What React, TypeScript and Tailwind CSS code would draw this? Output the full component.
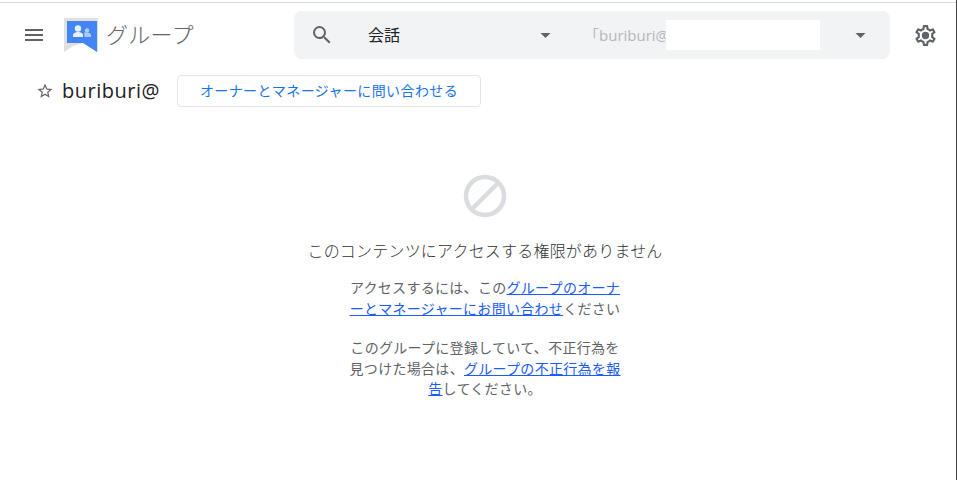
const Caret = () => (
  <svg width="11" height="5" viewBox="0 0 10 5" className="shrink-0">
    <path d="M0 0h10L5 5z" fill="#5f6368" />
  </svg>
);

const GroupsLogo = () => (
  <svg width="34" height="34" viewBox="0 0 34 34" className="shrink-0">
    <path d="M0 0h34v34L19 25 9 28 0 34z" fill="#e0e0e0" />
    <path d="M3 3h30v31L19 25H3z" fill="#4285f4" />
    <circle cx="14" cy="10.500" r="3.200" fill="#e8f0fe" />
    <path d="M9 19v-2c0-2 3-3 5-3s5 1 5 3v2z" fill="#e8f0fe" />
    <circle cx="23" cy="12.500" r="2.200" fill="#aecbfa" />
    <path d="M20.500 19v-2c0-.9-.4-1.500-.9-2 1-.4 2.400-.5 3.400-.4 1.800.2 4 .8 4 2.400v2z" fill="#aecbfa" />
  </svg>
);

const MenuIcon = () => (
  <svg width="24" height="24" viewBox="0 0 24 24" fill="#5f6368" className="shrink-0">
    <path d="M3 18h18v-2H3v2zm0-5h18v-2H3v2zm0-7v2h18V6H3z" />
  </svg>
);

const SearchIcon = () => (
  <svg width="24" height="24" viewBox="0 0 24 24" fill="#5f6368" className="shrink-0 ml-[16px]">
    <path d="M15.500 14h-.79l-.28-.27A6.471 6.471 0 0 0 16 9.500 6.500 6.500 0 1 0 9.500 16c1.610 0 3.090-.59 4.230-1.570l.27.28v.79l5 4.990L20.490 19l-4.990-5zm-6 0C7.010 14 5 11.990 5 9.500S7.010 5 9.500 5 14 7.010 14 9.500 11.990 14 9.500 14z" />
  </svg>
);

const GearIcon = () => (
  <svg width="25" height="25" viewBox="0 0 24 24" fill="#5f6368" className="shrink-0 ml-[23px]">
    <path d="M19.430 12.980c.04-.32.07-.64.07-.98 0-.34-.03-.66-.07-.98l2.110-1.650c.19-.15.24-.42.12-.64l-2-3.460c-.09-.16-.26-.25-.44-.25-.06 0-.12.01-.17.03l-2.490 1c-.52-.4-1.080-.73-1.690-.98l-.38-2.650C14.460 2.180 14.250 2 14 2h-4c-.25 0-.46.18-.49.42l-.38 2.650c-.61.25-1.170.59-1.690.98l-2.490-1c-.06-.02-.12-.03-.18-.03-.17 0-.34.09-.43.25l-2 3.460c-.13.22-.07.49.12.64l2.110 1.650c-.04.32-.07.65-.07.98 0 .33.03.66.07.98l-2.110 1.650c-.19.15-.24.42-.12.64l2 3.460c.09.16.26.25.44.25.06 0 .12-.01.17-.03l2.490-1c.52.4 1.080.73 1.690.98l.38 2.650c.03.24.24.42.49.42h4c.25 0 .46-.18.49-.42l.38-2.650c.61-.25 1.170-.59 1.690-.98l2.490 1c.06.02.12.03.18.03.17 0 .34-.09.43-.25l2-3.460c.12-.22.07-.49-.12-.64l-2.110-1.650zm-1.980-1.710c.04.31.05.52.05.73 0 .21-.02.43-.05.73l-.14 1.130.89.7 1.080.84-.7 1.210-1.270-.51-1.040-.42-.9.68c-.43.32-.84.56-1.250.73l-1.060.43-.16 1.130-.2 1.350h-1.400l-.19-1.350-.16-1.130-1.060-.43c-.43-.18-.83-.41-1.230-.71l-.91-.7-1.060.43-1.270.51-.7-1.210 1.080-.84.89-.7-.14-1.130c-.03-.31-.05-.54-.05-.74s.02-.43.05-.73l.14-1.130-.89-.7-1.080-.84.7-1.210 1.270.51 1.040.42.9-.68c.43-.32.84-.56 1.250-.73l1.060-.43.16-1.130.2-1.350h1.390l.19 1.350.16 1.130 1.060.43c.43.18.83.41 1.230.71l.91.7 1.060-.43 1.270-.51.7 1.210-1.070.85-.89.7.14 1.130z" />
    <circle cx="12" cy="12" r="3.500" />
  </svg>
);

const StarIcon = () => (
  <svg width="18" height="18" viewBox="0 0 24 24" fill="#5f6368" className="shrink-0">
    <path d="M22 9.240l-7.190-.62L12 2 9.190 8.630 2 9.240l5.460 4.730L5.820 21 12 17.270 18.180 21l-1.640-7.030L22 9.240zM12 15.400l-3.760 2.270 1-4.280-3.320-2.880 4.380-.38L12 6.100l1.710 4.040 4.380.38-3.320 2.880 1 4.280L12 15.400z" />
  </svg>
);

const BlockedIcon = () => (
  <svg width="46" height="46" viewBox="0 0 46 46" fill="none" stroke="#dadce0" strokeWidth="4.500" className="shrink-0">
    <circle cx="23" cy="23" r="19" />
    <path d="M9.500 36.500l27-27" />
  </svg>
);

const App = () => {
  return (
    <div className="h-[480px] w-[957px] overflow-hidden bg-white pt-[2px] border-r border-r-[#3c4043] font-['Noto_Sans_CJK_JP',sans-serif]">
      <div className="border-t border-t-[#dadce0]">
        <header className="flex items-center h-[64px] pl-[22px]">
          <MenuIcon />
          <div className="ml-[18px] flex items-center w-[230px]">
            <GroupsLogo />
            <span className="ml-[8px] pb-[5px] text-[22px] leading-none tracking-[0.3px] font-light text-[#5f6368]">グループ</span>
          </div>
          <div className="flex items-center h-[48px] w-[596px] rounded-lg bg-[#f1f3f4]">
            <SearchIcon />
            <span className="ml-[34px] w-[172px] pb-[3px] text-[16px] leading-none text-[#202124]">会話</span>
            <Caret />
            <span className="ml-[33px] w-[82px] overflow-hidden whitespace-nowrap text-[15px] text-[#b4b7bb] font-['Open_Sans','Noto_Sans_CJK_JP',sans-serif]">
              「buriburi@
            </span>
            <div className="h-[30px] w-[154px] bg-white shrink-0" />
            <div className="ml-[35px]"><Caret /></div>
          </div>
          <GearIcon />
        </header>
        <div className="flex items-center h-[40px] mt-[4px] pl-[36px]">
          <StarIcon />
          <span className="ml-[8px] w-[106px] whitespace-nowrap text-[20px] leading-none tracking-[0.5px] text-[#202124] font-['Open_Sans',sans-serif]">buriburi@</span>
          <button className="ml-[9px] h-[32px] w-[304px] pb-[2px] rounded border border-[#e4e6e8] text-[14px] tracking-[0.4px] text-[#1a73e8]">
            オーナーとマネージャーに問い合わせる
          </button>
        </div>
      </div>
      <main className="flex flex-col items-center mt-[62px] pl-[14px]">
        <BlockedIcon />
        <p className="mt-[19px] text-[16px] leading-6 tracking-[0.2px] font-light text-[#303336] whitespace-nowrap">
          このコンテンツにアクセスする権限がありません
        </p>
        <p className="mt-[15px] w-[272px] text-center text-[14px] leading-[21px] tracking-[0.3px] text-[#5f6368]">
          アクセスするには、この<a className="text-[#1a5cff] underline">グループのオーナーとマネージャーにお問い合わせ</a>ください
        </p>
        <p className="mt-[18px] w-[272px] text-center text-[14px] leading-[20.5px] tracking-[0.3px] text-[#5f6368]">
          このグループに登録していて、不正行為を見つけた場合は、<a className="text-[#1a5cff] underline">グループの不正行為を報告</a>してください。
        </p>
      </main>
    </div>
  );
};

export default App;
